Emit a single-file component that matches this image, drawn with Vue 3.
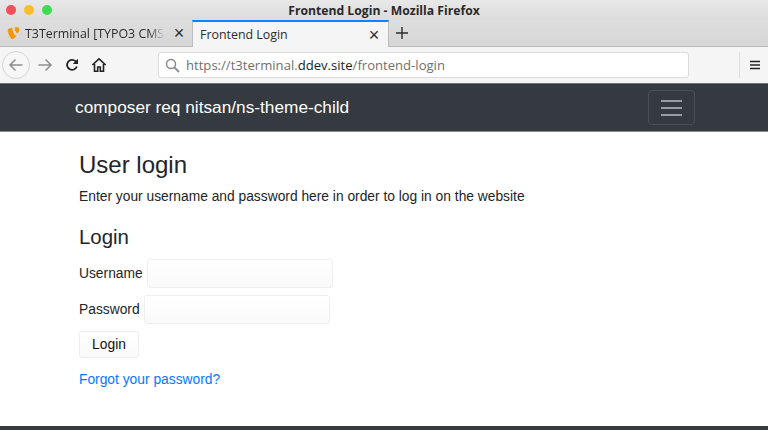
<template>
  <div class="window">
    <header class="titlebar">
      <div class="dots">
        <span class="dot red"></span>
        <span class="dot yellow"></span>
        <span class="dot green"></span>
      </div>
      <div class="window-title">Frontend Login - Mozilla Firefox</div>
    </header>

    <div class="tabs">
      <div class="tab inactive">
        <svg class="favicon" width="14" height="14" viewBox="0 0 14 14">
          <path d="M10.6 9.6c-.2.1-.4.1-.6.1-1.500 0-3.700-5.200-3.700-6.900 0-.6.100-.9.300-1.100C4.800 1.900 2.600 2.500 1.900 3.400c-.1.200-.2.500-.2.900 0 2.700 2.900 8.900 4.900 8.900.9 0 2.500-1.500 4-3.600zM9.700 1.300c1.900 0 3.700.3 3.700 1.400 0 2.100-1.300 4.600-2 4.600-1.200 0-2.600-3.300-2.600-4.900 0-.8.300-1.100.9-1.100z" fill="#f49700" />
        </svg>
        <span class="tab-label">T3Terminal [TYPO3 CMS</span>
        <span class="tab-close">×</span>
      </div>
      <div class="tab active">
        <span class="tab-label">Frontend Login</span>
        <span class="tab-close">×</span>
      </div>
      <div class="new-tab">
        <svg width="14" height="14" viewBox="0 0 14 14">
          <path d="M7 1v12M1 7h12" stroke="#2b2b2b" stroke-width="1.400" fill="none" />
        </svg>
      </div>
    </div>

    <div class="toolbar">
      <button class="nav-btn back">
        <svg width="16" height="16" viewBox="0 0 16 16">
          <path d="M14.500 8H2M7.500 2.500 2 8l5.500 5.500" stroke="#8e8e8e" stroke-width="1.500" fill="none" />
        </svg>
      </button>
      <svg class="forward" width="16" height="16" viewBox="0 0 16 16">
        <path d="M1.500 8H14M8.500 2.500 14 8l-5.500 5.500" stroke="#8e8e8e" stroke-width="1.500" fill="none" />
      </svg>
      <svg class="reload" width="14" height="14" viewBox="0 0 14 14">
        <path d="M11.800 8.500A5 5 0 1 1 10.500 3.200L12 4.700" stroke="#222" stroke-width="1.800" fill="none" />
        <path d="M13 0.800V6H7.800z" fill="#222" />
      </svg>
      <svg class="home" width="16" height="16" viewBox="0 0 16 16">
        <path d="M1.300 8 8 1.800 14.700 8M3.500 7v7.200h3.200V10h2.600v4.200h3.200V7" stroke="#222" stroke-width="1.600" fill="none" />
      </svg>
      <div class="urlbar">
        <svg width="15" height="15" viewBox="0 0 15 15">
          <circle cx="6" cy="6" r="4.500" stroke="#8a8a8a" stroke-width="1.500" fill="none" />
          <path d="M9.500 9.500 14 14" stroke="#8a8a8a" stroke-width="1.800" fill="none" />
        </svg>
        <span class="url">https://t3terminal.<b>ddev.site</b>/frontend-login</span>
      </div>
      <div class="toolbar-end">
        <svg width="12" height="12" viewBox="0 0 12 12">
          <path d="M1 2.500h10M1 6h10M1 9.500h10" stroke="#222" stroke-width="1.400" fill="none" />
        </svg>
      </div>
    </div>

    <nav class="navbar">
      <span class="brand">composer req nitsan/ns-theme-child</span>
      <button class="toggler">
        <span></span>
        <span></span>
        <span></span>
      </button>
    </nav>

    <main class="content">
      <h1>User login</h1>
      <p class="intro">Enter your username and password here in order to log in on the website</p>
      <h3>Login</h3>
      <div class="field">
        <label>Username</label>
        <input type="text" />
      </div>
      <div class="field">
        <label>Password</label>
        <input type="password" />
      </div>
      <button class="submit">Login</button>
      <a class="forgot" href="#">Forgot your password?</a>
    </main>

    <footer class="page-footer"></footer>
  </div>
</template>

<script setup>
</script>

<style>
html,
body {
  margin: 0;
  background: #fff;
}
</style>

<style scoped>
.window {
  width: 768px;
  height: 430px;
  display: flex;
  flex-direction: column;
  overflow: hidden;
  font-family: "Liberation Sans", Arial, sans-serif;
  color: #212529;
}

.titlebar {
  height: 20px;
  flex: none;
  display: grid;
  grid-template-columns: 1fr;
  align-items: center;
  background: linear-gradient(#e8e8e8, #dcdcdc);
  position: relative;
}

.dots {
  position: absolute;
  left: 6px;
  top: 5px;
  display: flex;
  gap: 8px;
}

.dot {
  width: 10px;
  height: 10px;
  border-radius: 50%;
}

.red { background: #f1505a; }
.yellow { background: #fbbd2e; }
.green { background: #3ddc52; }

.window-title {
  text-align: center;
  font-family: "Open Sans", sans-serif;
  font-size: 12.200px;
  font-weight: 700;
  color: #2a2a2a;
}

.tabs {
  height: 27px;
  flex: none;
  display: flex;
  background: linear-gradient(#dedede, #d6d6d6);
  border-bottom: 1px solid #b8b8b8;
  box-sizing: border-box;
  font-family: "Open Sans", sans-serif;
  font-size: 12.400px;
  color: #2b2b2b;
}

.tab {
  display: flex;
  align-items: center;
  box-sizing: border-box;
  position: relative;
}

.tab.inactive {
  width: 192px;
  padding: 0 7px 0 6px;
}

.favicon {
  margin-right: 5px;
  flex: none;
}

.tab.active {
  width: 197px;
  height: 27px;
  padding: 0 8px 0 7px;
  background: #f5f5f5;
  border-top: 2px solid #0a84ff;
  border-left: 1px solid #bdbdbd;
  border-right: 1px solid #bdbdbd;
}

.tab-label {
  flex: 1;
  white-space: nowrap;
  overflow: hidden;
}

.inactive .tab-label {
  -webkit-mask-image: linear-gradient(90deg, #000 88%, transparent);
  mask-image: linear-gradient(90deg, #000 88%, transparent);
}

.tab-close {
  font-size: 18px;
  line-height: 1;
  margin-left: 8px;
  width: 12px;
  text-align: center;
  font-family: "Liberation Sans", sans-serif;
}

.new-tab {
  width: 26px;
  display: flex;
  align-items: center;
  justify-content: center;
}

.toolbar {
  height: 37px;
  flex: none;
  display: flex;
  align-items: center;
  box-sizing: border-box;
  background: #f5f5f5;
  border-bottom: 1px solid #6f7276;
  padding: 0 7px 0 2px;
}

.nav-btn {
  width: 28px;
  height: 28px;
  padding: 0;
  border-radius: 50%;
  border: 1px solid #d4d4d4;
  background: #f7f7f7;
  display: flex;
  align-items: center;
  justify-content: center;
}

.forward {
  margin-left: 7px;
}

.reload {
  margin-left: 12px;
}

.home {
  margin-left: 12px;
}

.urlbar {
  width: 531px;
  height: 26px;
  margin-left: 51px;
  box-sizing: border-box;
  display: flex;
  align-items: center;
  gap: 6px;
  padding: 0 6px;
  background: #fff;
  border: 1px solid #dcdcdc;
  border-radius: 3px;
  font-family: "Open Sans", sans-serif;
  font-size: 13.100px;
  color: #6f6f6f;
}

.url b {
  font-weight: 400;
  color: #1c1c1c;
}

.toolbar-end {
  margin-left: auto;
  padding-left: 9px;
  height: 26px;
  display: flex;
  align-items: center;
  border-left: 1px solid #dedede;
}

.navbar {
  height: 48px;
  flex: none;
  display: flex;
  align-items: center;
  justify-content: space-between;
  box-sizing: border-box;
  background: #343a40;
  border-bottom: 1px solid #888;
  padding: 0 73px 0 75px;
}

.brand {
  font-size: 17.250px;
  color: #fff;
}

.toggler {
  width: 47px;
  height: 35px;
  padding: 0;
  display: flex;
  flex-direction: column;
  align-items: center;
  justify-content: center;
  gap: 5px;
  background: transparent;
  border: 1px solid #4a4f55;
  border-radius: 4px;
}

.toggler span {
  width: 21px;
  height: 2px;
  background: #9a9da0;
}

.content {
  flex: 1;
  padding: 18px 0 0 79px;
  display: flex;
  flex-direction: column;
  align-items: flex-start;
}

h1 {
  margin: 0;
  font-size: 24px;
  font-weight: 400;
  line-height: 29px;
}

.intro {
  margin: 8px 0 0;
  font-size: 13.800px;
  line-height: 20px;
}

h3 {
  margin: 17px 0 0;
  font-size: 20.400px;
  font-weight: 400;
  line-height: 26px;
}

.field {
  display: flex;
  align-items: center;
  gap: 4px;
  margin-top: 9px;
  font-size: 13.800px;
}

.field + .field {
  margin-top: 7px;
}

input {
  width: 186px;
  height: 29px;
  box-sizing: border-box;
  padding: 0;
  background: linear-gradient(#fff, #f9f9f9);
  border: 1px solid #efefef;
  border-radius: 3px;
}

.submit {
  margin-top: 7px;
  width: 60px;
  height: 27px;
  padding: 0;
  font-family: inherit;
  font-size: 13.800px;
  color: #111;
  background: linear-gradient(#fff, #fafafa);
  border: 1px solid #eee;
  border-radius: 3px;
}

.forgot {
  margin-top: 14px;
  font-size: 13.800px;
  line-height: 16px;
  color: #007bff;
  text-decoration: none;
}

.page-footer {
  height: 4px;
  flex: none;
  background: #343a40;
}
</style>
